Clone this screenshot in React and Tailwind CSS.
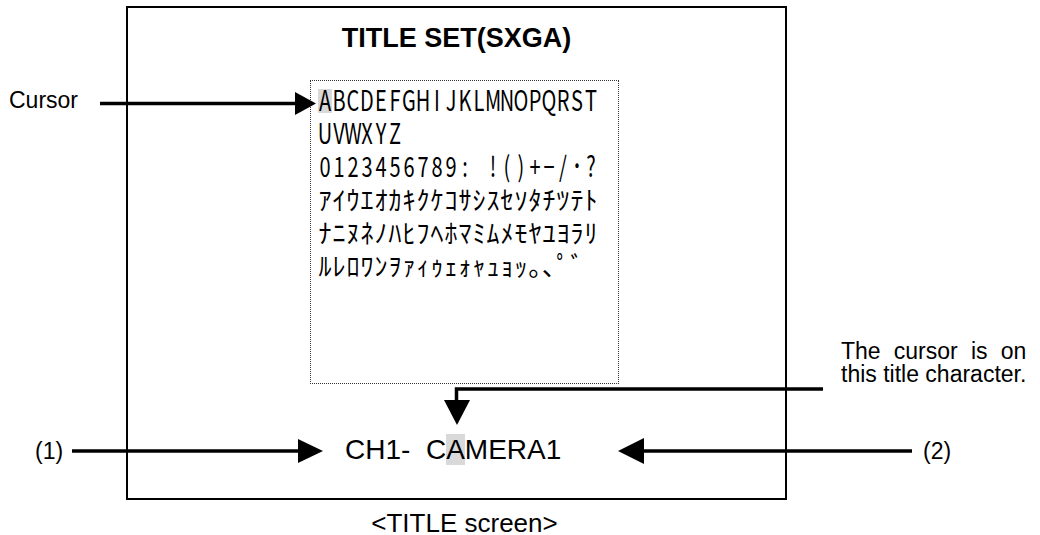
const sans = { fontFamily: '"Liberation Sans", Arial, sans-serif' };
const jp = { fontFamily: '"Noto Sans CJK JP", sans-serif' };

const rows = [
  { chars: "ABCDEFGHIJKLMNOPQRST", kana: false },
  { chars: "UVWXYZ", kana: false },
  { chars: "0123456789: !()+−/･?", kana: false },
  { chars: "ｱｲｳｴｵｶｷｸｹｺｻｼｽｾｿﾀﾁﾂﾃﾄ", kana: true },
  { chars: "ﾅﾆﾇﾈﾉﾊﾋﾌﾍﾎﾏﾐﾑﾒﾓﾔﾕﾖﾗﾘ", kana: true },
  { chars: "ﾙﾚﾛﾜﾝｦｧｨｩｪｫｬｭｮｯ｡､ﾟﾞ", kana: true },
];

const CharRow = ({ chars, kana, rowIndex }) => (
  <div className="flex h-[33px]">
    {Array.from(chars).map((c, i) => (
      <span
        key={i}
        className={`flex h-[33px] w-[14px] items-center justify-center ${
          rowIndex === 0 && i === 0
            ? "bg-[linear-gradient(to_bottom,transparent_6px,#d9d9d9_6px,#d9d9d9_30px,transparent_30px)]"
            : ""
        }`}
      >
        <span
          className={`shrink-0 whitespace-pre ${
            kana ? "text-[26px] leading-[30px]" : "scale-y-[1.4] text-[20px] leading-[22px]"
          }`}
        >
          {c}
        </span>
      </span>
    ))}
  </div>
);

const Arrows = () => (
  <svg
    className="pointer-events-none absolute inset-0"
    width="1040"
    height="535"
    viewBox="0 0 1040 535"
  >
    {/* Cursor */}
    <line x1="100" y1="103.5" x2="298" y2="103.5" stroke="#000" strokeWidth="3.5" />
    <polygon points="295,92 316,103.5 295,115" fill="#000" />
    {/* (1) */}
    <line x1="72" y1="451" x2="300" y2="451" stroke="#000" strokeWidth="3.5" />
    <polygon points="298,439 323,451 298,463" fill="#000" />
    {/* (2) */}
    <line x1="642" y1="451" x2="912" y2="451" stroke="#000" strokeWidth="3.5" />
    <polygon points="644,438 618,451 644,464" fill="#000" />
    {/* cursor is on this character */}
    <polyline
      points="823,389 456.5,389 456.5,402"
      fill="none"
      stroke="#000"
      strokeWidth="3.5"
    />
    <polygon points="444,400 470,400 457,425" fill="#000" />
  </svg>
);

export default function App() {
  return (
    <div className="relative h-[535px] w-[1040px] overflow-hidden bg-white text-black" style={sans}>
      {/* Screen frame */}
      <div className="ml-[126px] mt-[6px] h-[494px] w-[661px] border-2 border-black">
        <h1 className="mt-[14px] text-center text-[27px] font-bold leading-[32px]">
          TITLE SET(SXGA)
        </h1>
        <div
          className="ml-[182px] mt-[26px] h-[304px] w-[309px] border border-dotted border-[#333] pl-[7px] pt-[2px]"
          style={jp}
        >
          {rows.map((r, i) => (
            <CharRow key={i} chars={r.chars} kana={r.kana} rowIndex={i} />
          ))}
        </div>
        <div className="ml-[217px] mt-[48px] whitespace-pre text-[28px] leading-[36px]">
          CH1-  C<span className="bg-[#d9d9d9]">A</span>MERA1
        </div>
      </div>
      <div className="ml-[310px] mt-[12px] w-[309px] text-center text-[26px] leading-[22px]">
        &lt;TITLE screen&gt;
      </div>

      {/* Annotations */}
      <Arrows />
      <span className="absolute left-[9px] top-[87px] text-[23px] leading-[26px]">Cursor</span>
      <span className="absolute left-[35px] top-[438px] text-[23px] leading-[26px]">(1)</span>
      <span className="absolute left-[923px] top-[438px] text-[23px] leading-[26px]">(2)</span>
      <div className="absolute left-[841px] top-[340px] w-fit text-[23px] leading-[23px]">
        <div className="flex justify-between">
          <span>The</span>
          <span>cursor</span>
          <span>is</span>
          <span>on</span>
        </div>
        <div className="whitespace-nowrap">this title character.</div>
      </div>
    </div>
  );
}
